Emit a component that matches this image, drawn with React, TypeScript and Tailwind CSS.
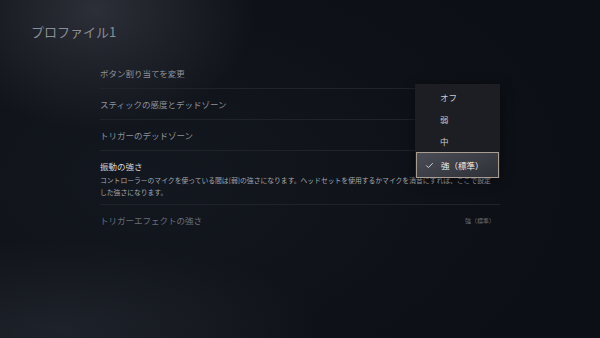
import React from "react";

const font = { fontFamily: '"Noto Sans CJK JP", "Noto Sans", sans-serif' };

const rows = [
  { label: "ボタン割り当てを変更", tone: "text-[#8e929a]" },
  { label: "スティックの感度とデッドゾーン", tone: "text-[#8e929a]" },
  { label: "トリガーのデッドゾーン", tone: "text-[#8e929a]" },
];

const options = ["オフ", "弱", "中"];

export default function App() {
  return (
    <div
      className="relative w-[600px] h-[338px] overflow-hidden bg-[#0c0f15] bg-[radial-gradient(ellipse_160px_120px_at_95px_10px,#2c2f37,transparent),radial-gradient(ellipse_260px_90px_at_60px_330px,#1e222a,transparent),radial-gradient(ellipse_420px_260px_at_150px_180px,#13171f,transparent)]"
      style={font}
    >
      <div className="pt-[24px] pl-[31px] h-[40px] text-[13px] leading-[16px] text-[#8a8e96]">
        プロファイル1
      </div>

      <div className="mt-[18px] ml-[100px] w-[400px] flex flex-col">
        {rows.map((r) => (
          <div
            key={r.label}
            className={`h-[31px] flex items-center border-b border-[#1f232a] text-[8.5px] ${r.tone}`}
          >
            {r.label}
          </div>
        ))}

        <div className="border-b border-[#1f232a] pt-[9px] pb-[6px]">
          <div className="text-[8.5px] leading-[12px] text-[#d6d7da]">振動の強さ</div>
          <p className="mt-[2px] w-[410px] text-[6.8px] leading-[12px] text-[#a4a7ad]">
            コントローラーのマイクを使っている間は[弱]の強さになります。ヘッドセットを使用するかマイクを消音にすれば、ここで設定
            <br />
            した強さになります。
          </p>
        </div>

        <div className="h-[31px] flex items-center justify-between text-[#6b6f77]">
          <span className="text-[8.5px]">トリガーエフェクトの強さ</span>
          <span className="text-[6px] pr-[5px]">強（標準）</span>
        </div>
      </div>

      <div className="absolute left-[415px] top-[84px] w-[85px] h-[94px] bg-[#1c1e24] pt-[2px] shadow-[0_2px_10px_rgba(0,0,0,0.5)]">
        {options.map((o) => (
          <div key={o} className="h-[22px] flex items-center pl-[25px] text-[8.5px] text-[#c9cacd]">
            {o}
          </div>
        ))}
        <div className="h-[26px] mx-[1px] flex items-center pl-[8px] border border-[#a99d92] bg-[linear-gradient(160deg,#4a4d55,#2d3037)] text-[8.5px] text-[#eeeeee]">
          <svg width="9" height="9" viewBox="0 0 24 24" fill="none" stroke="#d8d8d8" strokeWidth="2.5" strokeLinecap="round" strokeLinejoin="round">
            <path d="M4 12.5l5 5L20 6.5" />
          </svg>
          <span className="ml-[7px]">強（標準）</span>
        </div>
      </div>
    </div>
  );
}
